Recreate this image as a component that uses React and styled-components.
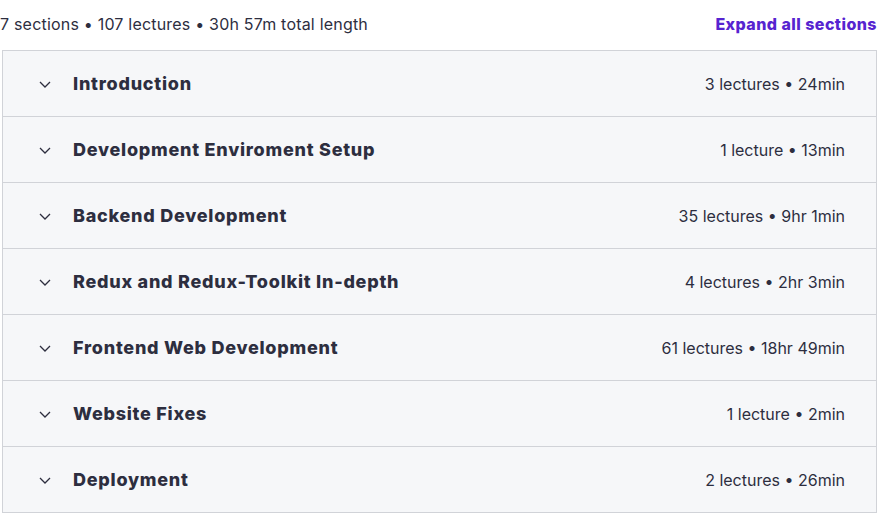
import React from 'react';
import styled, { createGlobalStyle } from 'styled-components';

const GlobalStyle = createGlobalStyle`
  body {
    margin: 0;
    background: #fff;
    font-family: Inter, "Liberation Sans", sans-serif;
    color: #2d2e3f;
  }
`;

const Wrap = styled.div`
  width: 877px;
  padding-left: 2px;
  box-sizing: border-box;
`;

const Summary = styled.div`
  display: flex;
  justify-content: space-between;
  align-items: center;
  height: 50px;
  padding-bottom: 3px;
  box-sizing: border-box;
  margin-left: -2px;
`;

const Stats = styled.span`
  font-size: 16px;
  letter-spacing: 0.2px;
  color: #2d2e3f;
`;

const ExpandLink = styled.button`
  border: 0;
  background: none;
  padding: 0;
  font-family: Inter, sans-serif;
  font-weight: 800;
  font-size: 16px;
  letter-spacing: 0.45px;
  color: #5624d0;
  cursor: pointer;
`;

const Panel = styled.div`
  border: 1px solid #d1d3d8;
  border-bottom: 0;
`;

const Section = styled.div`
  display: flex;
  align-items: center;
  height: 65px;
  padding: 0 31px 0 36px;
  background: #f6f7f9;
  border-bottom: 1px solid #d1d3d8;
`;

const Chevron = styled.svg`
  width: 12px;
  height: 12px;
  flex: none;
  margin-right: 22px;
`;

const Title = styled.h3`
  margin: 0;
  flex: 1;
  font-family: Inter, sans-serif;
  font-weight: 800;
  font-size: 18px;
  letter-spacing: 0.75px;
  color: #2d2e3f;
`;

const Meta = styled.span`
  font-size: 16px;
  color: #2d2e3f;
`;

const sections = [
  ['Introduction', '3 lectures • 24min'],
  ['Development Enviroment Setup', '1 lecture • 13min'],
  ['Backend Development', '35 lectures • 9hr 1min'],
  ['Redux and Redux-Toolkit In-depth', '4 lectures • 2hr 3min'],
  ['Frontend Web Development', '61 lectures • 18hr 49min'],
  ['Website Fixes', '1 lecture • 2min'],
  ['Deployment', '2 lectures • 26min'],
];

const App = () => (
  <>
    <GlobalStyle />
    <Wrap>
      <Summary>
        <Stats>7 sections • 107 lectures • 30h 57m total length</Stats>
        <ExpandLink>Expand all sections</ExpandLink>
      </Summary>
      <Panel>
        {sections.map(([title, meta]) => (
          <Section key={title}>
            <Chevron viewBox="0 0 12 12" fill="none" stroke="#2d2e3f" strokeWidth="1.3">
              <path d="M1 4l5 5L11 4" />
            </Chevron>
            <Title>{title}</Title>
            <Meta>{meta}</Meta>
          </Section>
        ))}
      </Panel>
    </Wrap>
  </>
);

export default App;
